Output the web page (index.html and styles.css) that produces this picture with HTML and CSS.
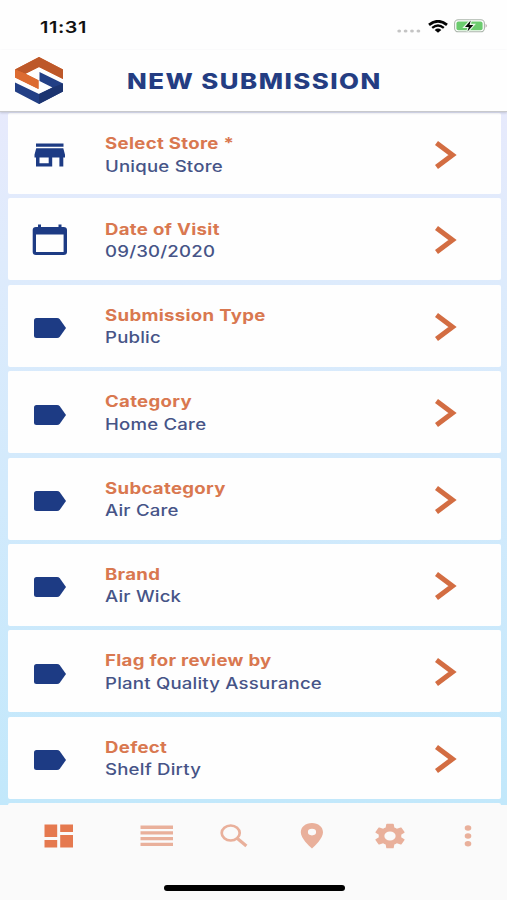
FILE: index.html
```html
<!DOCTYPE html>
<html lang="en">
<head>
<meta charset="utf-8">
<title>New Submission</title>
<link rel="stylesheet" href="styles.css">
</head>
<body>
<svg class="defs" width="0" height="0">
  <symbol id="chevron" viewBox="0 0 22 28"><path d="M1.500 2 17.500 14 1.500 26" fill="none" stroke="currentColor" stroke-width="5"/></symbol>
  <symbol id="label" viewBox="0 0 32 20"><path d="M2.500 0H23q1.700 0 2.800 1.300L32 10l-6.200 8.700Q24.700 20 23 20H2.500Q0 20 0 17.500v-15Q0 0 2.500 0Z" fill="currentColor"/></symbol>
</svg>
<div class="screen">
  <div class="status">
    <span class="time"><span class="wide">11:31</span></span>
    <div class="indicators">
      <svg class="dots" width="24" height="4" viewBox="0 0 24 4" fill="#c4c4c4"><ellipse cx="2.200" cy="2" rx="1.900" ry="1.500"/><ellipse cx="8.600" cy="2" rx="1.900" ry="1.500"/><ellipse cx="15" cy="2" rx="1.900" ry="1.500"/><ellipse cx="21.400" cy="2" rx="1.900" ry="1.500"/></svg>
      <svg class="wifi" width="20" height="13" viewBox="0 0 20 13" fill="none" stroke="#050505"><path d="M1 4.800Q10-2.200 19 4.800" stroke-width="2.800"/><path d="M4.200 7.900Q10 3.200 15.800 7.900" stroke-width="2.400"/><path d="M6.700 9.900Q10 7.300 13.300 9.900L10 12.700Z" fill="#050505" stroke="none"/></svg>
      <svg class="battery" width="34" height="14" viewBox="0 0 34 14"><rect x=".6" y=".8" width="29.800" height="12" rx="3.600" fill="#fff" stroke="#aab5aa" stroke-width="1.100"/><rect x="2.400" y="2.400" width="26.200" height="8.800" rx="2" fill="#6bcb6e"/><path d="M31.600 4.800q2.300 2 0 4Z" fill="#a99"/><path d="M16.700 1.500 11 7.900h3.800l-1.300 4.600L19.300 6h-3.800Z" fill="#050505" stroke="#e9f7e9" stroke-width="2.400" paint-order="stroke"/></svg>
    </div>
  </div>
  <header class="header">
    <svg class="logo" width="48" height="47" viewBox="0 0 48 47">
      <path d="M0 12.500 24 0 48 12.500V22L24 10 10.500 16.700 23.500 23.200V32L0 20.500Z" fill="#dc6b31"/>
      <path d="M0 12.500 24 0 48 12.500V22L24 10 10.500 16.700Z" fill="#bd5829"/>
      <path d="M0 12.500 10.500 16.700 23.500 23.200V32L0 20.500Z" fill="#dc6b31"/>
      <path d="M24.500 15 48 26.500V34.500L24 47 0 34.500V25.500L24 37 37.500 30.500 24.500 24Z" fill="#223f85"/>
      <path d="M37.500 30.500 48 26.500V34.500L24 47V37Z" fill="#1c3470"/>
    </svg>
    <h1 class="title wide">NEW SUBMISSION</h1>
  </header>
  <main class="list">
    <section class="row first">
      <div class="icon"><svg class="store" width="32" height="24" viewBox="0 0 32 24" fill="#1d3b84"><path d="M2 .5H29.500V3.700H2ZM2.200 5.200H29.300L31 11.800V14.600H29.300V23.500H25.400V14.600H18.200V23.500H2V14.600H.5V11.800ZM5.500 14.600V20.200H14.700V14.600Z" fill-rule="evenodd"/></svg></div>
      <div class="copy"><div class="name wide">Select Store *</div><div class="value wide">Unique Store</div></div>
      <svg class="chevron"><use href="#chevron"/></svg>
    </section>
    <section class="row">
      <div class="icon"><svg class="calendar" width="36" height="32" viewBox="0 0 36 32" fill="#1d3b84"><path d="M6 .5H9V3H26.500V.5H29.500V3H31.500Q35 3 35 6V28Q35 31 31.500 31H4Q.7 31 .7 28V6Q.7 3 4 3H6ZM4 10.500V28H31.600V10.500Z" fill-rule="evenodd"/></svg></div>
      <div class="copy"><div class="name wide">Date of Visit</div><div class="value wide">09/30/2020</div></div>
      <svg class="chevron"><use href="#chevron"/></svg>
    </section>
    <section class="row">
      <div class="icon"><svg class="label"><use href="#label"/></svg></div>
      <div class="copy"><div class="name wide">Submission Type</div><div class="value wide">Public</div></div>
      <svg class="chevron"><use href="#chevron"/></svg>
    </section>
    <section class="row">
      <div class="icon"><svg class="label"><use href="#label"/></svg></div>
      <div class="copy"><div class="name wide">Category</div><div class="value wide">Home Care</div></div>
      <svg class="chevron"><use href="#chevron"/></svg>
    </section>
    <section class="row">
      <div class="icon"><svg class="label"><use href="#label"/></svg></div>
      <div class="copy"><div class="name wide">Subcategory</div><div class="value wide">Air Care</div></div>
      <svg class="chevron"><use href="#chevron"/></svg>
    </section>
    <section class="row">
      <div class="icon"><svg class="label"><use href="#label"/></svg></div>
      <div class="copy"><div class="name wide">Brand</div><div class="value wide">Air Wick</div></div>
      <svg class="chevron"><use href="#chevron"/></svg>
    </section>
    <section class="row">
      <div class="icon"><svg class="label"><use href="#label"/></svg></div>
      <div class="copy"><div class="name wide">Flag for review by</div><div class="value wide">Plant Quality Assurance</div></div>
      <svg class="chevron"><use href="#chevron"/></svg>
    </section>
    <section class="row">
      <div class="icon"><svg class="label"><use href="#label"/></svg></div>
      <div class="copy"><div class="name wide">Defect</div><div class="value wide">Shelf Dirty</div></div>
      <svg class="chevron"><use href="#chevron"/></svg>
    </section>
    <section class="row next"></section>
  </main>
  <footer class="footer">
    <nav class="tabs">
      <svg class="active" width="30" height="24" viewBox="0 0 30 24" fill="currentColor"><path d="M.5.500H13.200V13H.500ZM16.200.500H29V8H16.200ZM.500 16H13.200V23.500H.500ZM16.200 11H29V23.500H16.200Z"/></svg>
      <svg class="lines" width="34" height="24" viewBox="0 0 34 24" fill="currentColor"><path d="M.5 1.500H33V5H.500ZM.500 7.200H33V10.500H.500ZM.500 13H33V16.300H.500ZM.500 18.700H33V22H.500Z"/></svg>
      <svg class="search" width="28" height="24" viewBox="0 0 28 24" fill="none" stroke="currentColor"><ellipse cx="10.700" cy="9" rx="9" ry="7.500" stroke-width="2.700"/><path d="M17.400 14.500 26.400 22" stroke-width="3.200"/></svg>
      <svg class="pin" width="24" height="26" viewBox="0 0 24 26" fill="currentColor"><path fill-rule="evenodd" d="M12 0C5.500 0 .8 4 .8 9.300.8 15.300 9 23 12 25.500 15 23 23 15.300 23 9.300 23 4 18.300 0 12 0ZM12 5.800a4.100 3.300 0 1 1 0 6.600 4.100 3.300 0 0 1 0-6.600Z"/></svg>
      <svg class="gear" width="32" height="26" viewBox="1.800 1.800 20.400 20.400" preserveAspectRatio="none" fill="currentColor"><path d="M19.140 12.940c.04-.3.060-.61.060-.94s-.02-.64-.07-.94l2.030-1.580c.18-.14.230-.41.120-.61l-1.920-3.320c-.12-.22-.37-.29-.59-.22l-2.390.96c-.5-.38-1.030-.7-1.620-.94l-.36-2.540c-.04-.24-.24-.41-.48-.41h-3.840c-.24 0-.43.170-.47.410l-.36 2.540c-.59.240-1.130.57-1.620.94l-2.390-.96c-.22-.08-.47 0-.59.220L2.740 8.870c-.12.210-.08.470.12.610l2.030 1.580c-.05.300-.09.630-.09.940s.02.640.070.940l-2.030 1.580c-.18.140-.23.410-.12.610l1.920 3.320c.12.220.37.290.59.220l2.390-.96c.5.380 1.030.7 1.620.94l.36 2.540c.05.240.24.410.48.410h3.840c.24 0 .44-.17.470-.41l.36-2.540c.59-.24 1.130-.56 1.620-.94l2.390.96c.22.080.470 0 .59-.22l1.920-3.320c.12-.22.070-.47-.12-.61ZM12 15.600a3.600 3.600 0 1 1 0-7.200 3.600 3.600 0 0 1 0 7.200Z"/></svg>
      <svg class="more" width="8" height="24" viewBox="0 0 8 24" fill="currentColor"><ellipse cx="4" cy="4" rx="3.300" ry="2.700"/><ellipse cx="4" cy="12" rx="3.300" ry="2.700"/><ellipse cx="4" cy="19.800" rx="3.300" ry="2.700"/></svg>
    </nav>
    <div class="home"></div>
  </footer>
</div>
</body>
</html>
```
FILE: styles.css
```css
* { box-sizing: border-box; }
body { margin: 0; font-family: Inter, "Liberation Sans", sans-serif; background: #fafafa; }
svg { display: block; flex: none; }
.defs { position: absolute; }
.screen { width: 507px; height: 900px; display: flex; flex-direction: column; overflow: hidden; }
.wide { transform: scaleX(1.2); transform-origin: left center; white-space: nowrap; }
.status { height: 50px; flex: none; display: flex; justify-content: space-between; padding: 17px 19px 0 40px; background: #fefefe; }
.time { font-size: 16.500px; font-weight: 600; line-height: 20px; letter-spacing: .5px; color: #111; }
.time .wide { display: inline-block; }
.indicators { display: flex; align-items: flex-start; padding-top: 2px; }
.dots { margin-top: 9.500px; }
.wifi { margin: 1px 6px 0 7px; }
.header { height: 62px; flex: none; display: flex; align-items: center; padding: 0 0 1px 15px; background: #fefefe; border-bottom: 1px solid #c8c9cc; box-shadow: 0 1px 2px rgba(60, 60, 80, .22); z-index: 1; }
.logo { margin: 0 64px 0 -.5px; }
.title { margin: 0; padding-top: 1px; font-size: 21.500px; line-height: 28px; font-weight: 800; letter-spacing: 1.220px; color: #243d82; }
.list { height: 692.600px; flex: none; overflow: hidden; display: flex; flex-direction: column; gap: 4.300px; padding: 1.400px 6.500px 0 8px; background: linear-gradient(#e7eafc, #deebfc 22%, #d2eafc 55%, #c2e8fb); }
.row { height: 82.100px; flex: none; display: flex; align-items: center; padding-top: 2px; background: #fefefe; border-radius: 2px; }
.first { height: 80.700px; padding-top: 3px; }
.next { background: #fafafa; }
.icon { width: 97px; flex: none; padding-left: 26px; color: #1d3b84; }
.store { margin: -1px 0 0 -.5px; }
.calendar { margin-left: -2px; }
.label { width: 32px; height: 20px; margin-top: 3px; }
.copy { width: 330px; padding-top: 1px; }
.name, .value { font-size: 15.500px; line-height: 22.400px; }
.name { font-weight: 700; letter-spacing: .26px; color: #d97850; }
.value { font-weight: 500; letter-spacing: .17px; color: #465487; }
.chevron { width: 22px; height: 28px; color: #d36d42; }
.footer { flex: 1; display: flex; flex-direction: column; align-items: center; background: #fafafa; }
.tabs { width: 100%; height: 62px; flex: none; display: flex; align-items: center; padding-left: 44px; color: #e9b09b; }
.active { color: #e5794f; }
.lines { margin-left: 66px; }
.search { margin-left: 45.500px; }
.pin { margin-left: 52.500px; }
.gear { margin-left: 50px; }
.more { margin-left: 58px; }
.home { width: 181px; height: 6px; margin: 18.500px 0 0 1px; border-radius: 3px; background: #000; }
```
